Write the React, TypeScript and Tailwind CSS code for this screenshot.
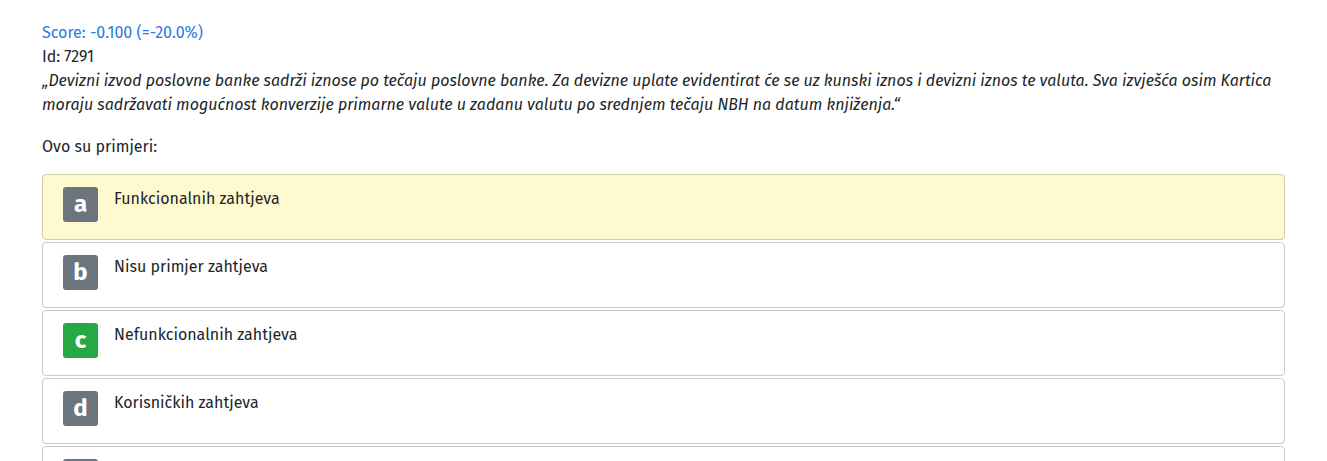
const answers = [
  { letter: "a", text: "Funkcionalnih zahtjeva", state: "selected" },
  { letter: "b", text: "Nisu primjer zahtjeva", state: "none" },
  { letter: "c", text: "Nefunkcionalnih zahtjeva", state: "correct" },
  { letter: "d", text: "Korisničkih zahtjeva", state: "none" },
  { letter: "e", text: "Poslovnih zahtjeva", state: "none" },
];

function Answer({ letter, text, state }: { letter: string; text: string; state: string }) {
  const card =
    state === "selected"
      ? "border-[#d3cc9e] bg-[#fff9cf]"
      : "border-[#c9c9c9] bg-white";
  const badge = state === "correct" ? "bg-[#28a745]" : "bg-[#6c757d]";
  return (
    <div className={`flex h-[66px] items-start gap-4 rounded-[4px] border px-5 pt-3 ${card}`}>
      <span
        className={`flex h-[35px] w-[35px] shrink-0 items-center justify-center rounded-[3px] pb-[2px] text-[24px] font-bold text-white ${badge}`}
      >
        {letter}
      </span>
      <span className="leading-6">{text}</span>
    </div>
  );
}

export default function App() {
  return (
    <main
      className="min-h-screen bg-white px-[42px] pt-[21px] text-[16px] text-[#212529]"
      style={{ fontFamily: '"Fira Sans", "Open Sans", sans-serif' }}
    >
      <div className="leading-6">
        <p className="text-[#2a7ae2]">Score: -0.100 (=-20.0%)</p>
        <p>Id: 7291</p>
        <p className="italic">
          „Devizni izvod poslovne banke sadrži iznose po tečaju poslovne banke. Za devizne uplate
          evidentirat će se uz kunski iznos i devizni iznos te valuta. Sva izvješća osim Kartica
          moraju sadržavati mogućnost konverzije primarne valute u zadanu valutu po srednjem tečaju
          NBH na datum knjiženja.“
        </p>
        <p className="mt-[18px]">Ovo su primjeri:</p>
      </div>
      <div className="mt-[15px] flex flex-col gap-[2px]">
        {answers.map((a) => (
          <Answer key={a.letter} {...a} />
        ))}
      </div>
    </main>
  );
}
